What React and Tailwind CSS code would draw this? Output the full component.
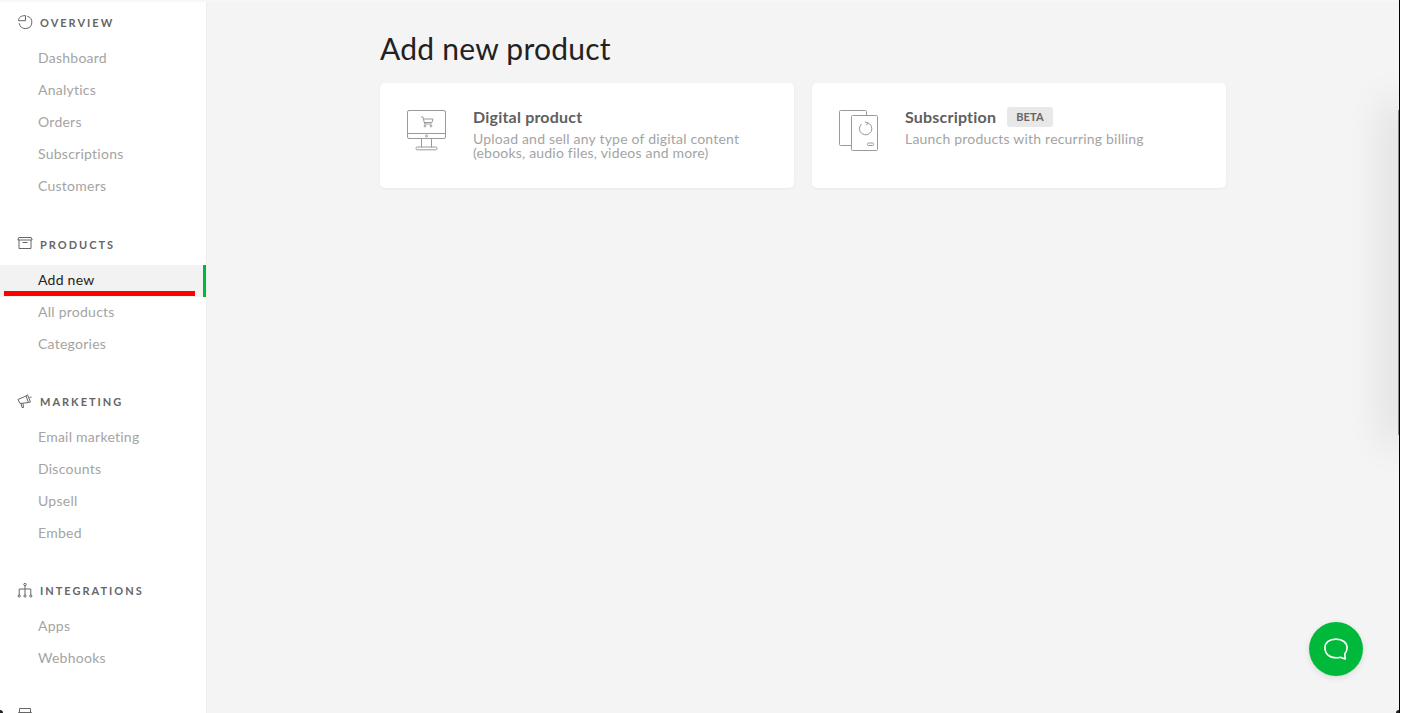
import React from 'react';

const OverviewIcon = () => (
  <svg width="16" height="16" viewBox="0 0 16 16" fill="none" stroke="#666" strokeWidth="1" className="shrink-0">
    <path d="M1.500 5.700C1.500 2.500 4 .6 8.500.6v5.100z" />
    <path d="M10.300 1.200A6.300 6.300 0 1 1 2.300 8.300" />
  </svg>
);

const ProductsIcon = () => (
  <svg width="16" height="16" viewBox="0 0 16 16" fill="none" stroke="#666" strokeWidth="1" className="shrink-0">
    <path d="M.8 3 1.800.5h12.400l1 2.500z" />
    <path d="M2 3v8.500h12V3" />
    <path d="M5.500 5.500h5" />
  </svg>
);

const MarketingIcon = () => (
  <svg width="16" height="16" viewBox="0 0 16 16" fill="none" stroke="#666" strokeWidth="1" className="shrink-0">
    <path d="M1 5.500 9 2l2.500 6.500L3 9.500z" />
    <path d="M4 9.500l1 4h1.500L6 9.300" />
    <path d="M9 2 10.500.8 13.500 8l-2 .5" />
    <path d="M12.500 3.500l2-.5" />
  </svg>
);

const IntegrationsIcon = () => (
  <svg width="16" height="16" viewBox="0 0 16 16" fill="none" stroke="#666" strokeWidth="1" className="shrink-0">
    <circle cx="8" cy="1.500" r="1.200" />
    <path d="M8 2.700v9.300M2.200 12V6h11.600v6" />
    <circle cx="2.200" cy="13" r="1.100" />
    <circle cx="8" cy="13" r="1.100" />
    <circle cx="13.800" cy="13" r="1.100" />
  </svg>
);

const StoreIcon = () => (
  <svg width="16" height="16" viewBox="0 0 16 16" fill="none" stroke="#666" strokeWidth="1" className="shrink-0">
    <path d="M2.500.5h11v4h-11zM1.500 4.500h13v9h-13z" />
  </svg>
);

const sections = [
  { title: 'OVERVIEW', icon: OverviewIcon, items: ['Dashboard', 'Analytics', 'Orders', 'Subscriptions', 'Customers'] },
  { title: 'PRODUCTS', icon: ProductsIcon, items: ['Add new', 'All products', 'Categories'] },
  { title: 'MARKETING', icon: MarketingIcon, items: ['Email marketing', 'Discounts', 'Upsell', 'Embed'] },
  { title: 'INTEGRATIONS', icon: IntegrationsIcon, items: ['Apps', 'Webhooks'] },
];

const DigitalIcon = () => (
  <svg width="40" height="41" viewBox="0 0 40 41" fill="none" stroke="#9a9a9a" strokeWidth="1" className="shrink-0">
    <rect x="0.500" y="0.500" width="38" height="28" rx="1.500" />
    <path d="M.5 23.500h38" />
    <circle cx="19.500" cy="26" r="1" />
    <path d="M14.500 28.500v9M24.500 28.500v9" />
    <rect x="9" y="37" width="21" height="2.800" rx="1.200" />
    <path d="M14 7h2l1.600 7h7M16.400 9h9.600l-1 3.500h-8" />
    <circle cx="18" cy="16" r="0.900" />
    <circle cx="24" cy="16" r="0.900" />
  </svg>
);

const SubscriptionIcon = () => (
  <svg width="40" height="41" viewBox="0 0 40 41" fill="none" stroke="#9a9a9a" strokeWidth="1" className="shrink-0">
    <path d="M12 35.500H1.500a1 1 0 0 1-1-1V1.500a1 1 0 0 1 1-1h25a1 1 0 0 1 1 1v4" />
    <rect x="12.500" y="5.500" width="26" height="35" rx="1" />
    <path d="M22.500 14a6.200 6.200 0 1 0 6-1.300" />
    <path d="M26 12l2.700.7-1 2.500" />
    <rect x="28.500" y="33" width="6" height="2.500" rx="0.800" />
  </svg>
);

const Card = ({ icon: Icon, title, badge, children }) => (
  <div className="flex h-[105px] w-[414px] gap-[26px] rounded-[5px] bg-white pl-[27px] pt-[27px] shadow-[0_1px_3px_rgba(0,0,0,0.05)]">
    <Icon />
    <div className="-mt-[1px]">
      <div className="flex h-[15px] items-center gap-[11px]">
        <span className="text-[16px] font-bold tracking-[0.2px] text-[#606060]">{title}</span>
        {badge && <span className="rounded-[3px] bg-[#e8e8e8] px-[9px] py-[3px] text-[11px] font-bold leading-[14px] tracking-[0.2px] text-[#666]">{badge}</span>}
      </div>
      <p className="mt-[8px] text-[14px] leading-[14px] tracking-[0.2px] text-[#a4a4a4]">{children}</p>
    </div>
  </div>
);

export default function App() {
  return (
    <div className="h-[713px] w-[1420px] overflow-hidden bg-white font-['Lato','Liberation_Sans',sans-serif]">
      <div className="relative flex h-[713px] w-[1400px] overflow-hidden border-r-[1.500px] border-black">
        <aside className="h-full w-[207px] shrink-0 overflow-hidden border-r border-[#eeeeee] bg-white pt-[15px]">
          {sections.map((s) => (
            <div key={s.title} className="mb-[33px] first:mb-[34px]">
              <div className="flex h-[16px] items-center gap-[7px] pl-[17px]">
                <s.icon />
                <span className="text-[11px] font-bold tracking-[2px] text-[#666]">{s.title}</span>
              </div>
              <ul className="mt-[12px]">
                {s.items.map((item) =>
                  item === 'Add new' ? (
                    <li key={item} className="relative flex h-[32px] items-center border-r-[3px] border-[#00b93a] bg-[#f2f2f2] pb-[4px] pl-[38px] text-[14px] tracking-[0.25px] text-[#222]">
                      {item}
                      <span className="absolute bottom-[1px] left-[4px] h-[5px] w-[191px] bg-[#ff0000]" />
                    </li>
                  ) : (
                    <li key={item} className="flex h-[32px] items-center pb-[4px] pl-[38px] text-[14px] tracking-[0.25px] text-[#a4a4a4]">{item}</li>
                  )
                )}
              </ul>
            </div>
          ))}
          <div className="flex h-[16px] items-center pl-[17px]">
            <StoreIcon />
          </div>
        </aside>
        <main className="relative flex-1 overflow-hidden bg-[#f4f4f4] pl-[173px] pt-[29px]">
          <h1 className="text-[30px] leading-[38px] tracking-[0.25px] text-[#222]">Add new product</h1>
          <div className="mt-[16px] flex gap-[18px]">
            <Card icon={DigitalIcon} title="Digital product">
              Upload and sell any type of digital content<br />(ebooks, audio files, videos and more)
            </Card>
            <Card icon={SubscriptionIcon} title="Subscription" badge="BETA">
              Launch products with recurring billing
            </Card>
          </div>
          {/* drawer edge peeking in from the right, only its shadow shows */}
          <div className="absolute right-0 top-[110px] h-[325px] w-[1.500px] bg-[#8a8a8a] shadow-[0_0_40px_8px_rgba(0,0,0,0.16)]" />
          <button className="absolute bottom-[37px] right-[36px] flex h-[54px] w-[54px] items-center justify-center rounded-full bg-[#00b93a] shadow-[0_2px_6px_rgba(0,0,0,0.1)]">
            <svg width="28" height="26" viewBox="0 0 24 22" fill="none" stroke="#fff" strokeWidth="1.400">
              <path d="M12 2.500c5.500 0 9.500 3 9.500 7.500 0 2.200-.8 4-2 5.200l.4 4.300-4.200-1.500c-1.200.4-2.400.5-3.700.5-5.500 0-9.500-3.400-9.500-8.300S6.500 2.500 12 2.500z" strokeLinejoin="round" />
            </svg>
          </button>
        </main>
        {/* top hairline and window corners */}
        <span className="absolute inset-x-0 top-0 h-[2px] bg-[#f7f7f7]" />
        <span className="absolute bottom-0 left-0 h-[3px] w-[3px] rounded-tr-[3px] bg-[#222]" />
        <span className="absolute bottom-0 right-0 h-[3px] w-[3px] rounded-tl-[3px] bg-[#222]" />
      </div>
    </div>
  );
}
